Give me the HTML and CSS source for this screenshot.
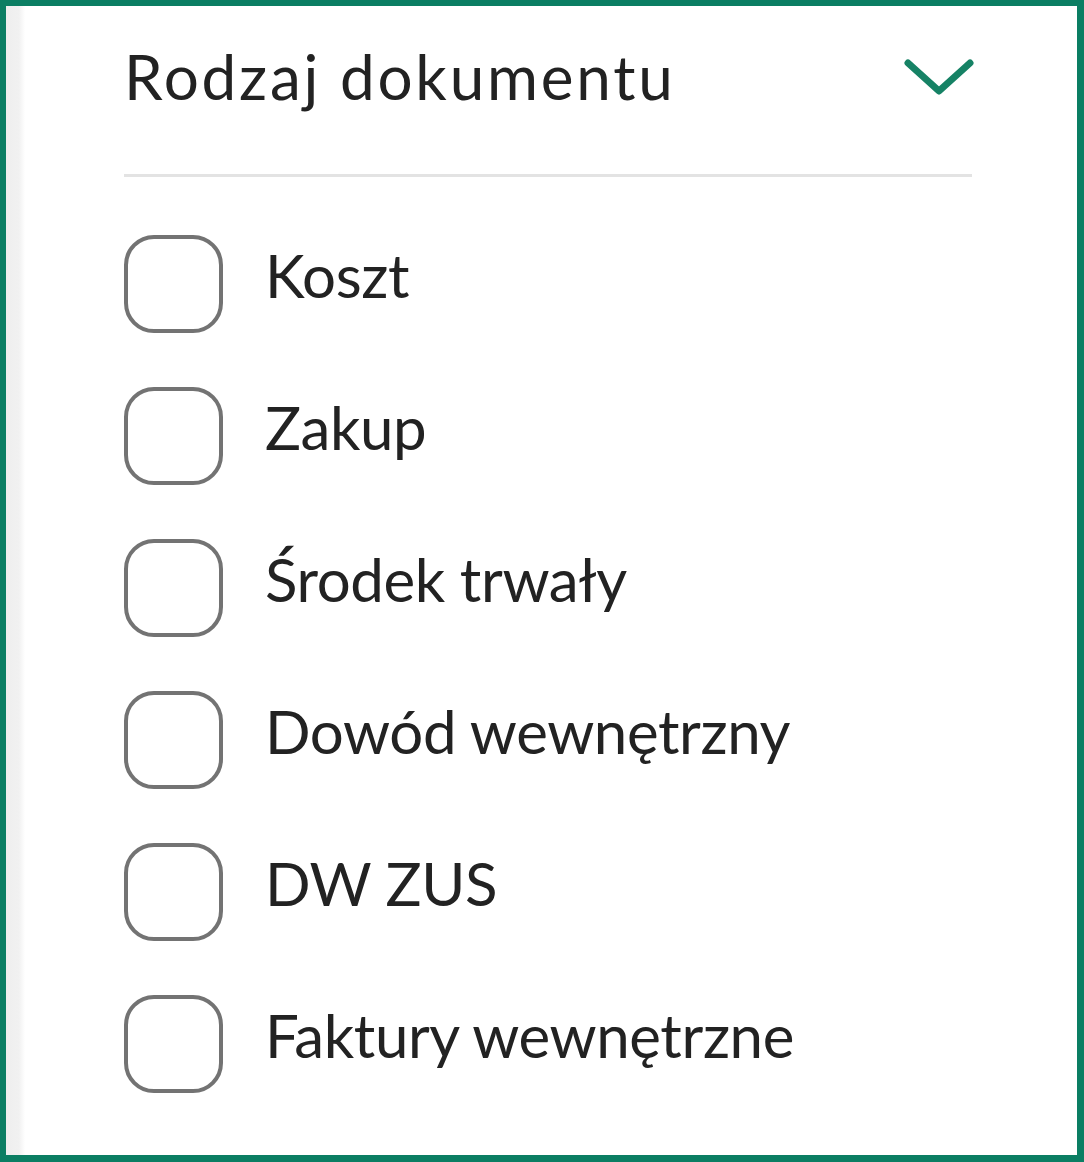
FILE: index.html
```html
<!DOCTYPE html>
<html lang="pl">
<head>
<meta charset="utf-8">
<title>Rodzaj dokumentu</title>
<link rel="stylesheet" href="styles.css">
</head>
<body>
<section class="panel">
  <div class="content">
    <header class="head">
      <h2 class="title">Rodzaj dokumentu</h2>
      <svg class="chev" viewBox="0 0 70 40" width="70" height="40" aria-hidden="true">
        <polyline points="4,5 35,33 66,5" fill="none" stroke="#168265" stroke-width="7" stroke-linecap="round" stroke-linejoin="round"/>
      </svg>
    </header>
    <hr class="divider">
    <ul class="list">
      <li class="item"><span class="box"></span><span class="label">Koszt</span></li>
      <li class="item"><span class="box"></span><span class="label">Zakup</span></li>
      <li class="item"><span class="box"></span><span class="label">Środek trwały</span></li>
      <li class="item"><span class="box"></span><span class="label">Dowód wewnętrzny</span></li>
      <li class="item"><span class="box"></span><span class="label">DW ZUS</span></li>
      <li class="item"><span class="box"></span><span class="label">Faktury wewnętrzne</span></li>
    </ul>
  </div>
</section>
</body>
</html>
```

FILE: styles.css
```css
html, body {
  margin: 0;
  padding: 0;
}
body {
  width: 1084px;
  height: 1162px;
  font-family: Lato, "Open Sans", sans-serif;
  color: #232323;
}
.panel {
  box-sizing: border-box;
  width: 1084px;
  height: 1162px;
  border: 6px solid #0b7e63;
  border-right-width: 7px;
  border-bottom-width: 7px;
  background: linear-gradient(to right, #eeeeee 0, #f1f1f1 13px, #ffffff 19px);
}
.content {
  padding: 34px 105px 0 118px;
}
.head {
  display: flex;
  align-items: center;
  justify-content: space-between;
}
.title {
  margin: 0;
  font-size: 62px;
  font-weight: 400;
  line-height: 72px;
  letter-spacing: 2.8px;
  color: #222;
}
.chev {
  display: block;
  margin: 4px -2px 0 0;
}
.divider {
  margin: 62px 0 0;
  border: 0;
  height: 3px;
  background: #e3e3e3;
}
.list {
  list-style: none;
  margin: 58px 0 0;
  padding: 0;
  display: flex;
  flex-direction: column;
  gap: 54px;
}
.item {
  display: flex;
  align-items: center;
  gap: 42px;
  height: 98px;
}
.box {
  box-sizing: border-box;
  flex: none;
  width: 99px;
  height: 98px;
  border: 4px solid #737373;
  border-radius: 30px;
  background: #fff;
}
.label {
  font-size: 60px;
  line-height: 72px;
  letter-spacing: -0.4px;
  color: #222;
  margin-top: -18px;
}
```
